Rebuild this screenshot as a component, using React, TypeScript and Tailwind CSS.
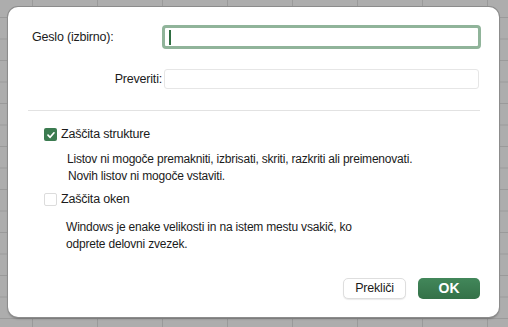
import React from "react";

function CheckBox({ checked }: { checked: boolean }) {
  if (checked) {
    return (
      <span className="flex h-[13px] w-[13px] items-center justify-center rounded-[2px] bg-[#3b7b50]">
        <svg width="10" height="10" viewBox="0 0 10 10" fill="none">
          <path d="M2 5.2 L4.1 7.3 L8 2.8" stroke="white" strokeWidth="1.7" strokeLinecap="round" strokeLinejoin="round" />
        </svg>
      </span>
    );
  }
  return <span className="block h-[13px] w-[13px] rounded-[2px] border border-[#dcdcdc] bg-white" />;
}

export default function App() {
  return (
    <div className="h-[327px] w-[508px] overflow-hidden bg-[#adadad] bg-[linear-gradient(to_right,#9a9a9a_1px,transparent_1px),linear-gradient(to_bottom,#9a9a9a_1px,transparent_1px)] bg-[size:65px_21.5px] bg-[position:32px_17px] pl-[8px] pt-[7px] font-['Liberation_Sans',Arial,sans-serif] text-[12px] tracking-[-0.2px] text-[#1b1b1b]">
      <div className="flex h-[310px] w-[491px] flex-col rounded-[10px] bg-white pt-[18px] shadow-[0_0_0_1px_#8c8c8c,0_2px_2px_rgba(0,0,0,0.25)]">
        <div className="flex h-[24px] items-center">
          <div className="w-[154px] pl-[24px] text-[12.5px]">Geslo (izbirno):</div>
          <div className="flex h-[24px] w-[319px] items-center rounded-[4px] border-[3px] border-[#90b49a]">
            <span className="ml-[4px] block h-[15px] w-[2px] bg-[#2f6e42]" />
          </div>
        </div>

        <div className="mt-[20px] flex h-[20px] items-center">
          <div className="w-[154px] text-right text-[12.5px]">Preveriti:</div>
          <div className="ml-[2px] h-[20px] w-[315px] rounded-[3px] border border-[#e6e6e6]" />
        </div>

        <div className="mx-[20px] mt-[21px] h-px w-[452px] bg-[#e2e2e2]" />

        <div className="ml-[36px] mt-[16px] flex items-center gap-[4px] leading-[15px]">
          <CheckBox checked />
          <span className="text-[12.5px]">Zaščita strukture</span>
        </div>
        <div className="ml-[59px] mt-[9px] leading-[17px]">
          <div>Listov ni mogoče premakniti, izbrisati, skriti, razkriti ali preimenovati.</div>
          <div className="pl-[1px]">Novih listov ni mogoče vstaviti.</div>
        </div>

        <div className="ml-[36px] mt-[7px] flex items-center gap-[4px] leading-[15px]">
          <CheckBox checked={false} />
          <span className="text-[12.5px]">Zaščita oken</span>
        </div>
        <div className="ml-[58px] mt-[12px] leading-[17px]">
          <div>Windows je enake velikosti in na istem mestu vsakič, ko</div>
          <div>odprete delovni zvezek.</div>
        </div>

        <div className="mt-auto mb-[18px] flex justify-end gap-[12px] pr-[19px]">
          <button className="h-[21px] w-[63px] rounded-[5px] border border-[#dedede] bg-white text-[12.5px] text-[#1b1b1b] shadow-[0_1px_1px_rgba(0,0,0,0.08)]">
            Prekliči
          </button>
          <button className="h-[21px] w-[62px] rounded-[5px] bg-[linear-gradient(to_bottom,#42875a,#347148)] text-[14px] font-bold tracking-normal text-white">
            OK
          </button>
        </div>
      </div>
    </div>
  );
}
